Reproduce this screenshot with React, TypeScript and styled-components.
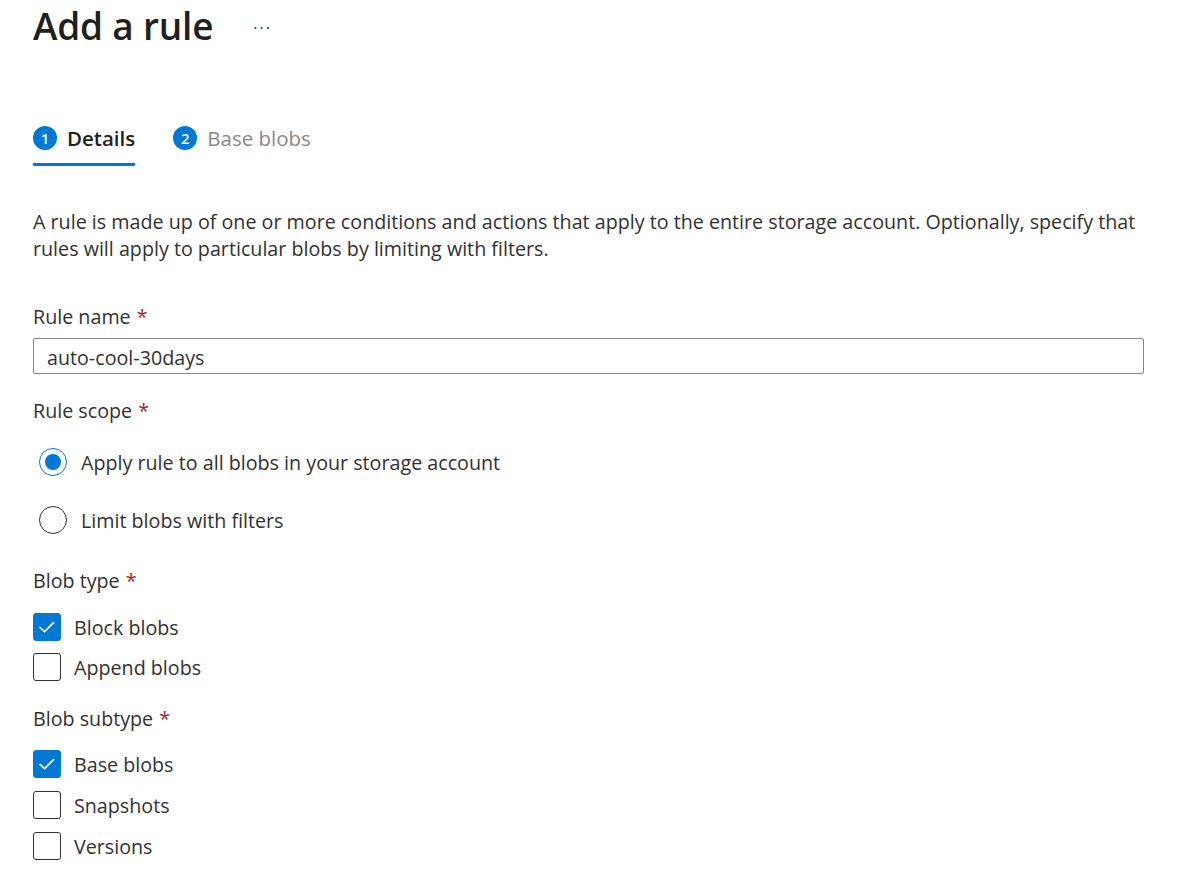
import React from "react";
import styled, { createGlobalStyle } from "styled-components";

const Global = createGlobalStyle`
  html, body { margin: 0; padding: 0; background: #ffffff; }
  body { font-family: "Open Sans", "Noto Sans", "Liberation Sans", sans-serif; color: #323130; }
  * { box-sizing: border-box; }
`;

const Page = styled.div`
  padding: 0 56px 0 33px;
  font-size: 19.7px;
  line-height: 27px;
`;

const Header = styled.div`
  display: flex;
  align-items: center;
  height: 52px;
`;

const Title = styled.h1`
  margin: 0;
  font-size: 37px;
  font-weight: 600;
  line-height: 52px;
  color: #201f1e;
  letter-spacing: -0.2px;
`;

const More = styled.span`
  margin-left: 40px;
  font-size: 16px;
  letter-spacing: 2px;
  color: #323130;
  position: relative;
  top: 2px;
`;

const Tabs = styled.div`
  display: flex;
  gap: 38px;
  margin-top: 72px;
`;

const Tab = styled.div<{ $active?: boolean }>`
  display: flex;
  align-items: center;
  gap: 10px;
  height: 42px;
  padding-bottom: 11px;
  border-bottom: 3px solid ${(p) => (p.$active ? "#0078d4" : "transparent")};
  color: ${(p) => (p.$active ? "#201f1e" : "#8a8886")};
  font-weight: ${(p) => (p.$active ? 600 : 400)};
  font-size: 20.5px;
`;

const StepNum = styled.span`
  display: inline-flex;
  align-items: center;
  justify-content: center;
  width: 24px;
  height: 24px;
  border-radius: 50%;
  background: #0078d4;
  color: #ffffff;
  font-size: 15px;
  font-weight: 600;
  line-height: 1;
`;

const Intro = styled.p`
  margin: 42px 0 0;
`;

const Label = styled.div<{ $gap: number }>`
  margin-top: ${(p) => p.$gap}px;
`;

const Req = styled.span`
  color: #a4262c;
  margin-left: 6px;
`;

const TextInput = styled.input`
  display: block;
  width: 100%;
  height: 36px;
  margin-top: 8px;
  padding: 2px 13px 0;
  border: 1px solid #8a8886;
  border-radius: 2px;
  font: inherit;
  color: #323130;
  outline: none;
`;

const RadioGroup = styled.div`
  display: flex;
  flex-direction: column;
  gap: 30px;
  margin-top: 24px;
  padding-left: 6px;
`;

const OptionRow = styled.label`
  display: flex;
  align-items: center;
  height: 28px;
`;

const Radio = styled.span<{ $checked?: boolean }>`
  flex: none;
  width: 28px;
  height: 28px;
  border-radius: 50%;
  border: 1.5px solid ${(p) => (p.$checked ? "#0078d4" : "#323130")};
  display: flex;
  align-items: center;
  justify-content: center;
  margin-right: 14px;
  &::after {
    content: "";
    display: ${(p) => (p.$checked ? "block" : "none")};
    width: 16px;
    height: 16px;
    border-radius: 50%;
    background: #0078d4;
  }
`;

const CheckGroup = styled.div<{ $gap: number; $spacing: number }>`
  display: flex;
  flex-direction: column;
  gap: ${(p) => p.$spacing}px;
  margin-top: ${(p) => p.$gap}px;
`;

const Box = styled.span<{ $checked?: boolean }>`
  flex: none;
  width: 28px;
  height: 28px;
  border-radius: 3px;
  border: 1.5px solid ${(p) => (p.$checked ? "#0078d4" : "#323130")};
  background: ${(p) => (p.$checked ? "#0078d4" : "#ffffff")};
  display: flex;
  align-items: center;
  justify-content: center;
  margin-right: 13px;
`;

const Check = () => (
  <svg width="20" height="20" viewBox="0 0 20 20" fill="none">
    <path d="M3.2 10.6 L7.6 14.6 L16.6 5.6" stroke="#ffffff" strokeWidth="1.7" strokeLinecap="round" strokeLinejoin="round" />
  </svg>
);

const CheckItem = ({ label, checked }: { label: string; checked?: boolean }) => (
  <OptionRow>
    <Box $checked={checked}>{checked && <Check />}</Box>
    {label}
  </OptionRow>
);

export default function App() {
  return (
    <>
      <Global />
      <Page>
        <Header>
          <Title>Add a rule</Title>
          <More>···</More>
        </Header>
        <Tabs>
          <Tab $active>
            <StepNum>1</StepNum>
            Details
          </Tab>
          <Tab>
            <StepNum>2</StepNum>
            Base blobs
          </Tab>
        </Tabs>
        <Intro>
          A rule is made up of one or more conditions and actions that apply to the entire storage account. Optionally, specify that rules will apply to particular blobs by limiting with filters.
        </Intro>
        <Label $gap={41}>
          Rule name<Req>*</Req>
        </Label>
        <TextInput defaultValue="auto-cool-30days" />
        <Label $gap={23}>
          Rule scope<Req>*</Req>
        </Label>
        <RadioGroup>
          <OptionRow>
            <Radio $checked />
            Apply rule to all blobs in your storage account
          </OptionRow>
          <OptionRow>
            <Radio />
            Limit blobs with filters
          </OptionRow>
        </RadioGroup>
        <Label $gap={33}>
          Blob type<Req>*</Req>
        </Label>
        <CheckGroup $gap={19} $spacing={12}>
          <CheckItem label="Block blobs" checked />
          <CheckItem label="Append blobs" />
        </CheckGroup>
        <Label $gap={24}>
          Blob subtype<Req>*</Req>
        </Label>
        <CheckGroup $gap={18} $spacing={13}>
          <CheckItem label="Base blobs" checked />
          <CheckItem label="Snapshots" />
          <CheckItem label="Versions" />
        </CheckGroup>
      </Page>
    </>
  );
}
